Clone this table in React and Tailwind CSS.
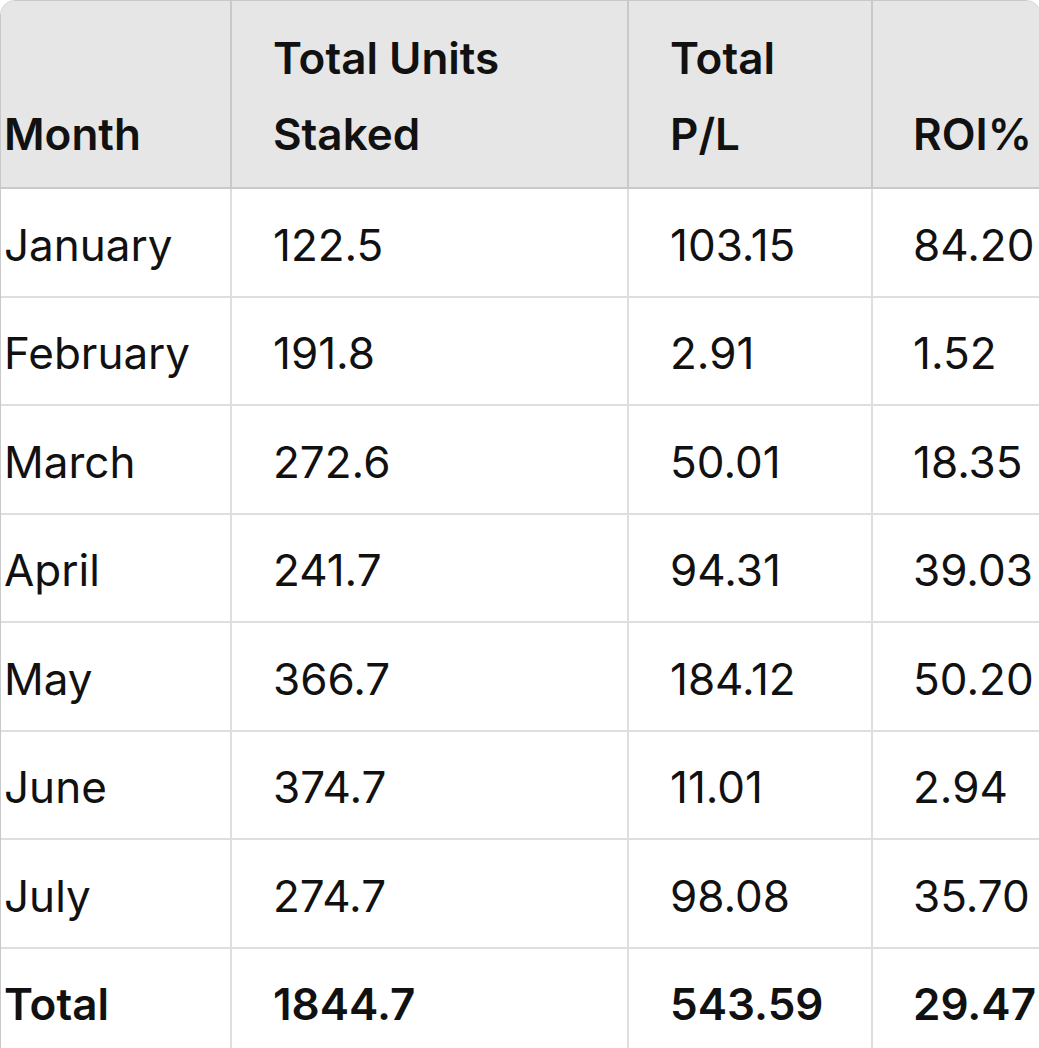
const rows = [
  ["January", "122.5", "103.15", "84.20"],
  ["February", "191.8", "2.91", "1.52"],
  ["March", "272.6", "50.01", "18.35"],
  ["April", "241.7", "94.31", "39.03"],
  ["May", "366.7", "184.12", "50.20"],
  ["June", "374.7", "11.01", "2.94"],
  ["July", "274.7", "98.08", "35.70"],
];

const totals = ["Total", "1844.7", "543.59", "29.47"];

export default function App() {
  return (
    <div className="h-[1048px] w-[1039px] overflow-hidden bg-white font-['Inter',sans-serif] text-[#111]">
      <div className="w-[1041px] overflow-hidden rounded-t-[15px] border border-[#c9c9c9]">
        <table className="w-full table-fixed border-collapse text-[44px] leading-[76px]">
          <colgroup>
            <col className="w-[230px]" />
            <col className="w-[397px]" />
            <col className="w-[244px]" />
            <col />
          </colgroup>
          <thead>
            <tr className="bg-[#e6e6e6] text-left align-bottom font-semibold">
              <th className="border-b-2 border-[#c9c9c9] pb-[15px] pl-[3px] pt-[19px] font-semibold">
                Month
              </th>
              <th className="border-b-2 border-l-2 border-[#c9c9c9] pb-[15px] pl-[41px] pt-[19px] font-semibold">
                Total Units
                <br />
                Staked
              </th>
              <th className="border-b-2 border-l-2 border-[#c9c9c9] pb-[15px] pl-[41px] pt-[19px] font-semibold">
                Total
                <br />
                P/L
              </th>
              <th className="border-b-2 border-l-2 border-[#c9c9c9] pb-[15px] pl-[40px] pt-[19px] font-semibold">
                ROI%
              </th>
            </tr>
          </thead>
          <tbody>
            {rows.map((r) => (
              <tr key={r[0]}>
                <td className="border-b-2 border-[#dedede] pb-[13px] pt-[17.5px] pl-[3px] whitespace-nowrap">{r[0]}</td>
                <td className="border-b-2 border-l-2 border-[#dedede] pb-[13px] pt-[17.5px] pl-[41px]">{r[1]}</td>
                <td className="border-b-2 border-l-2 border-[#dedede] pb-[13px] pt-[17.5px] pl-[41px]">{r[2]}</td>
                <td className="border-b-2 border-l-2 border-[#dedede] pb-[13px] pt-[17.5px] pl-[40px]">{r[3]}</td>
              </tr>
            ))}
            <tr className="font-semibold">
              <td className="pb-[13px] pt-[17.5px] pl-[3px]">{totals[0]}</td>
              <td className="border-l-2 border-[#dedede] pb-[13px] pt-[17.5px] pl-[41px]">{totals[1]}</td>
              <td className="border-l-2 border-[#dedede] pb-[13px] pt-[17.5px] pl-[41px]">{totals[2]}</td>
              <td className="border-l-2 border-[#dedede] pb-[13px] pt-[17.5px] pl-[40px]">{totals[3]}</td>
            </tr>
          </tbody>
        </table>
      </div>
    </div>
  );
}
